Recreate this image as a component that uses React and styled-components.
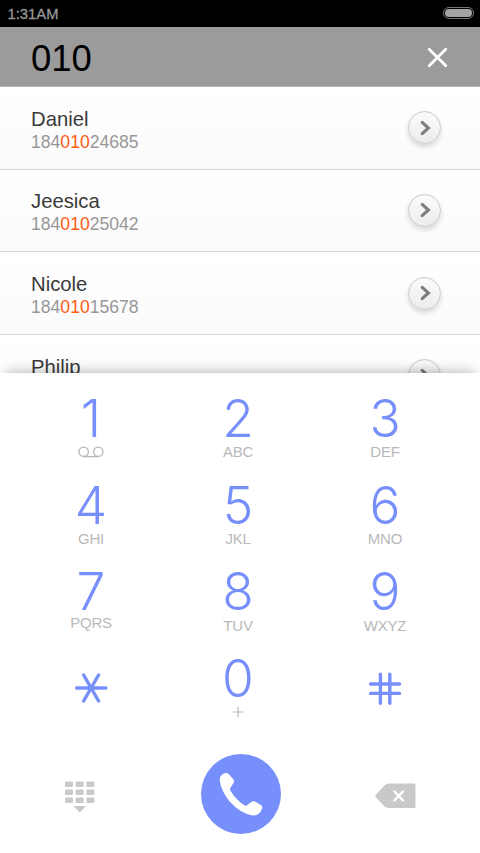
import React from "react";
import styled, { createGlobalStyle } from "styled-components";

const GlobalStyle = createGlobalStyle`
    body {
        margin: 0;
        background: #fff;
        font-family: "Liberation Sans", Arial, sans-serif;
    }
`

const Screen = styled.div`
    width: 480px;
    height: 853px;
    display: flex;
    flex-direction: column;
    overflow: hidden;
    background: #fff;
`

const StatusBar = styled.div`
    box-sizing: border-box;
    height: 27px;
    flex: none;
    padding: 0 6px 0 7.5px;
    display: flex;
    align-items: flex-start;
    justify-content: space-between;
    background: #000;
    color: #989898;
    font-size: 14.8px;
    line-height: 29px;
    -webkit-text-stroke: 0.3px #989898;
`

const Battery = styled.div`
    box-sizing: border-box;
    width: 31px;
    height: 12px;
    margin-top: 7px;
    border: 1px solid #777;
    border-radius: 6px;
    padding: 1px;

    &::before {
        content: "";
        display: block;
        height: 8px;
        border-radius: 4px;
        background: #a3a3a3;
    }
`

const SearchBar = styled.div`
    box-sizing: border-box;
    height: 60px;
    flex: none;
    padding: 0 32px 0 31px;
    display: flex;
    align-items: center;
    justify-content: space-between;
    background: #9b9b9b;
    border-bottom: 1px solid #b4b4b4;
    color: #000;
`

const Query = styled.span`
    padding-top: 5px;
    font-size: 36.5px;
    line-height: 42px;
`

const IconButton = styled.button`
    display: flex;
    border: 0;
    padding: ${props => props.$drop || 0}px 0 0;
    background: none;
`

const List = styled.div`
    height: 286px;
    flex: none;
    overflow: hidden;
`

const Row = styled.div`
    box-sizing: border-box;
    height: 82.67px;
    padding: 0 39px 0 31px;
    display: flex;
    align-items: center;
    justify-content: space-between;
    background: linear-gradient(#fff, #fafafa);
    border-bottom: 1px solid #d6d6d6;
`

const Contact = styled.div`
    padding-top: 5px;
`

const Name = styled.div`
    color: #3a3a3a;
    font-size: 20.3px;
    line-height: 24px;
`

const Number = styled.div`
    color: #989898;
    font-size: 17.6px;
    line-height: 23px;
`

const Match = styled.span`
    color: #ff5a14;
`

const Arrow = styled.button`
    box-sizing: border-box;
    width: 33px;
    height: 33px;
    padding: 0;
    display: flex;
    align-items: center;
    justify-content: center;
    border: 1px solid #c9c9c9;
    border-radius: 50%;
    background: linear-gradient(#fbfbfb, #ececec);
    box-shadow: 0 3px 5px rgba(0, 0, 0, 0.14);
`

const Panel = styled.div`
    position: relative;
    flex: 1;
    padding: 19px 0 0 17.5px;
    background: #fff;
    box-shadow: 0 -6px 13px -6px rgba(0, 0, 0, 0.32);
`

const Keys = styled.div`
    display: grid;
    grid-template-columns: repeat(3, 147px);
    grid-template-rows: repeat(4, 86.5px);
`

const Key = styled.button`
    border: 0;
    padding: 0;
    background: none;
    display: flex;
    flex-direction: column;
    align-items: center;
    font-family: inherit;
`

const Digit = styled.span`
    color: #778ffa;
    font-family: Inter, "Liberation Sans", sans-serif;
    font-size: 51.5px;
    font-weight: 300;
    line-height: 52px;
`

const Letters = styled.span`
    height: 18px;
    margin-top: ${props => props.$shift ?? -1}px;
    display: flex;
    align-items: center;
    color: #b9b9b9;
    font-size: 15px;
    letter-spacing: -0.2px;
    line-height: 18px;
`

const Symbol = styled.span`
    display: flex;
    padding: 19px 0 0 0.5px;
`

const Actions = styled.div`
    height: 80px;
    padding-top: 15.5px;
    display: grid;
    grid-template-columns: 124px 198.5px 110px;
    justify-items: center;
    align-items: center;
`

const CallButton = styled.button`
    width: 80px;
    height: 80px;
    padding: 0;
    display: flex;
    border: 0;
    border-radius: 50%;
    background: #778ffa;
`

const contacts = [
    { name: "Daniel", number: ["184", "010", "24685"] },
    { name: "Jeesica", number: ["184", "010", "25042"] },
    { name: "Nicole", number: ["184", "010", "15678"] },
    { name: "Philip", number: ["184", "010", "31127"] },
];

const Voicemail = () => (
    <svg width="26" height="12" viewBox="0 0 26 12" fill="none" stroke="#b9b9b9" strokeWidth="1.4">
        <circle cx="5.7" cy="5.8" r="4.7" />
        <circle cx="20.3" cy="5.8" r="4.7" />
        <path d="M5.7 10.6h14.6" />
    </svg>
);

const Plus = () => (
    <svg width="12" height="12" viewBox="0 0 12 12" stroke="#b4b4b4" strokeWidth="1.2">
        <path d="M6 .7v10.6M.7 6h10.6" />
    </svg>
);

const Star = () => (
    <svg width="34" height="34" viewBox="0 0 34 34" stroke="#778ffa" strokeWidth="3.4" strokeLinecap="round">
        <path d="M2.6 17h29.2M9.6 4l15 26M24.6 4l-15 26" />
    </svg>
);

const Hash = () => (
    <svg width="34" height="34" viewBox="0 0 34 34" stroke="#778ffa" strokeWidth="3.4" strokeLinecap="round">
        <path d="M2.6 13h29M2.6 22.4h29M12.4 3.2v29M21.8 3.2v29" />
    </svg>
);

const keys = [
    { digit: "1", letters: <Voicemail /> },
    { digit: "2", letters: "ABC" },
    { digit: "3", letters: "DEF" },
    { digit: "4", letters: "GHI" },
    { digit: "5", letters: "JKL" },
    { digit: "6", letters: "MNO" },
    { digit: "7", letters: "PQRS", shift: -3 },
    { digit: "8", letters: "TUV", shift: 0 },
    { digit: "9", letters: "WXYZ", shift: 0 },
    { symbol: <Star /> },
    { digit: "0", letters: <Plus /> },
    { symbol: <Hash /> },
];

function App() {
    return (
        <Screen>
            <GlobalStyle />
            <StatusBar>
                <span>1:31AM</span>
                <Battery />
            </StatusBar>
            <SearchBar>
                <Query>010</Query>
                <IconButton aria-label="Clear" $drop={1}>
                    <svg width="21" height="21" viewBox="0 0 21 21" stroke="#fff" strokeWidth="2.8" strokeLinecap="round">
                        <path d="M2.2 2.2l16.6 16.6M18.8 2.2L2.2 18.8" />
                    </svg>
                </IconButton>
            </SearchBar>
            <List>
                {contacts.map(({ name, number }) => (
                    <Row key={name}>
                        <Contact>
                            <Name>{name}</Name>
                            <Number>
                                {number[0]}<Match>{number[1]}</Match>{number[2]}
                            </Number>
                        </Contact>
                        <Arrow aria-label="Details">
                            <svg width="12" height="16" viewBox="0 0 12 16" fill="none" stroke="#7d7d7d" strokeWidth="3.1" strokeLinecap="round">
                                <path d="M3.2 2.4L9.4 8l-6.2 5.6" />
                            </svg>
                        </Arrow>
                    </Row>
                ))}
            </List>
            <Panel>
                <Keys>
                    {keys.map(({ digit, letters, shift, symbol }, i) => (
                        <Key key={i}>
                            {digit && <Digit>{digit}</Digit>}
                            {letters && <Letters $shift={shift}>{letters}</Letters>}
                            {symbol && <Symbol>{symbol}</Symbol>}
                        </Key>
                    ))}
                </Keys>
                <Actions>
                    <IconButton aria-label="Hide keypad" $drop={7}>
                        <svg width="30" height="32" viewBox="0 0 30 32" fill="#c9c9c9">
                            {[0, 8, 16].map((y) =>
                                [0, 10.7, 21.4].map((x) => (
                                    <rect key={`${x}-${y}`} x={x} y={y + 0.5} width="8" height="5.6" rx="1" />
                                ))
                            )}
                            <path d="M8.5 25h12.6l-6.3 6.4z" />
                        </svg>
                    </IconButton>
                    <CallButton aria-label="Call">
                        <svg width="80" height="80" viewBox="0 0 80 80" fill="#fff">
                            <path d="M18.8 26.5C18.4 22 22 19.8 24.2 19.1Q26 18.6 27.4 19.8L32.4 25.4Q33.6 27 32.6 28.8L29.2 34.2C28.6 35.6 29.4 36.6 30 37.6Q35.6 46.6 43.4 51.2C45 52.2 46 51.6 47 50.6L50.2 47.9Q51.8 46.7 54 47.5L60 50.9Q61.7 52 61.2 54C60 58.4 57 61.8 51.6 61.4Q39.4 59.4 28.6 47.4Q19.8 36.4 18.8 26.5Z" />
                        </svg>
                    </CallButton>
                    <IconButton aria-label="Delete" $drop={4}>
                        <svg width="41" height="26" viewBox="0 0 41 26">
                            <path d="M14 .5H39Q40.5 .5 40.5 2V23.5Q40.5 25 39 25H14Q11.5 25 9.5 23.4L1 14.3Q-.2 13 1 11.5L9.5 2.5Q11.5 .5 14 .5Z" fill="#c9c9c9" />
                            <path d="M19.4 8.5l8.6 8.9M28 8.5l-8.6 8.9" stroke="#fff" strokeWidth="2.3" strokeLinecap="round" />
                        </svg>
                    </IconButton>
                </Actions>
            </Panel>
        </Screen>
    );
}

export default App;
